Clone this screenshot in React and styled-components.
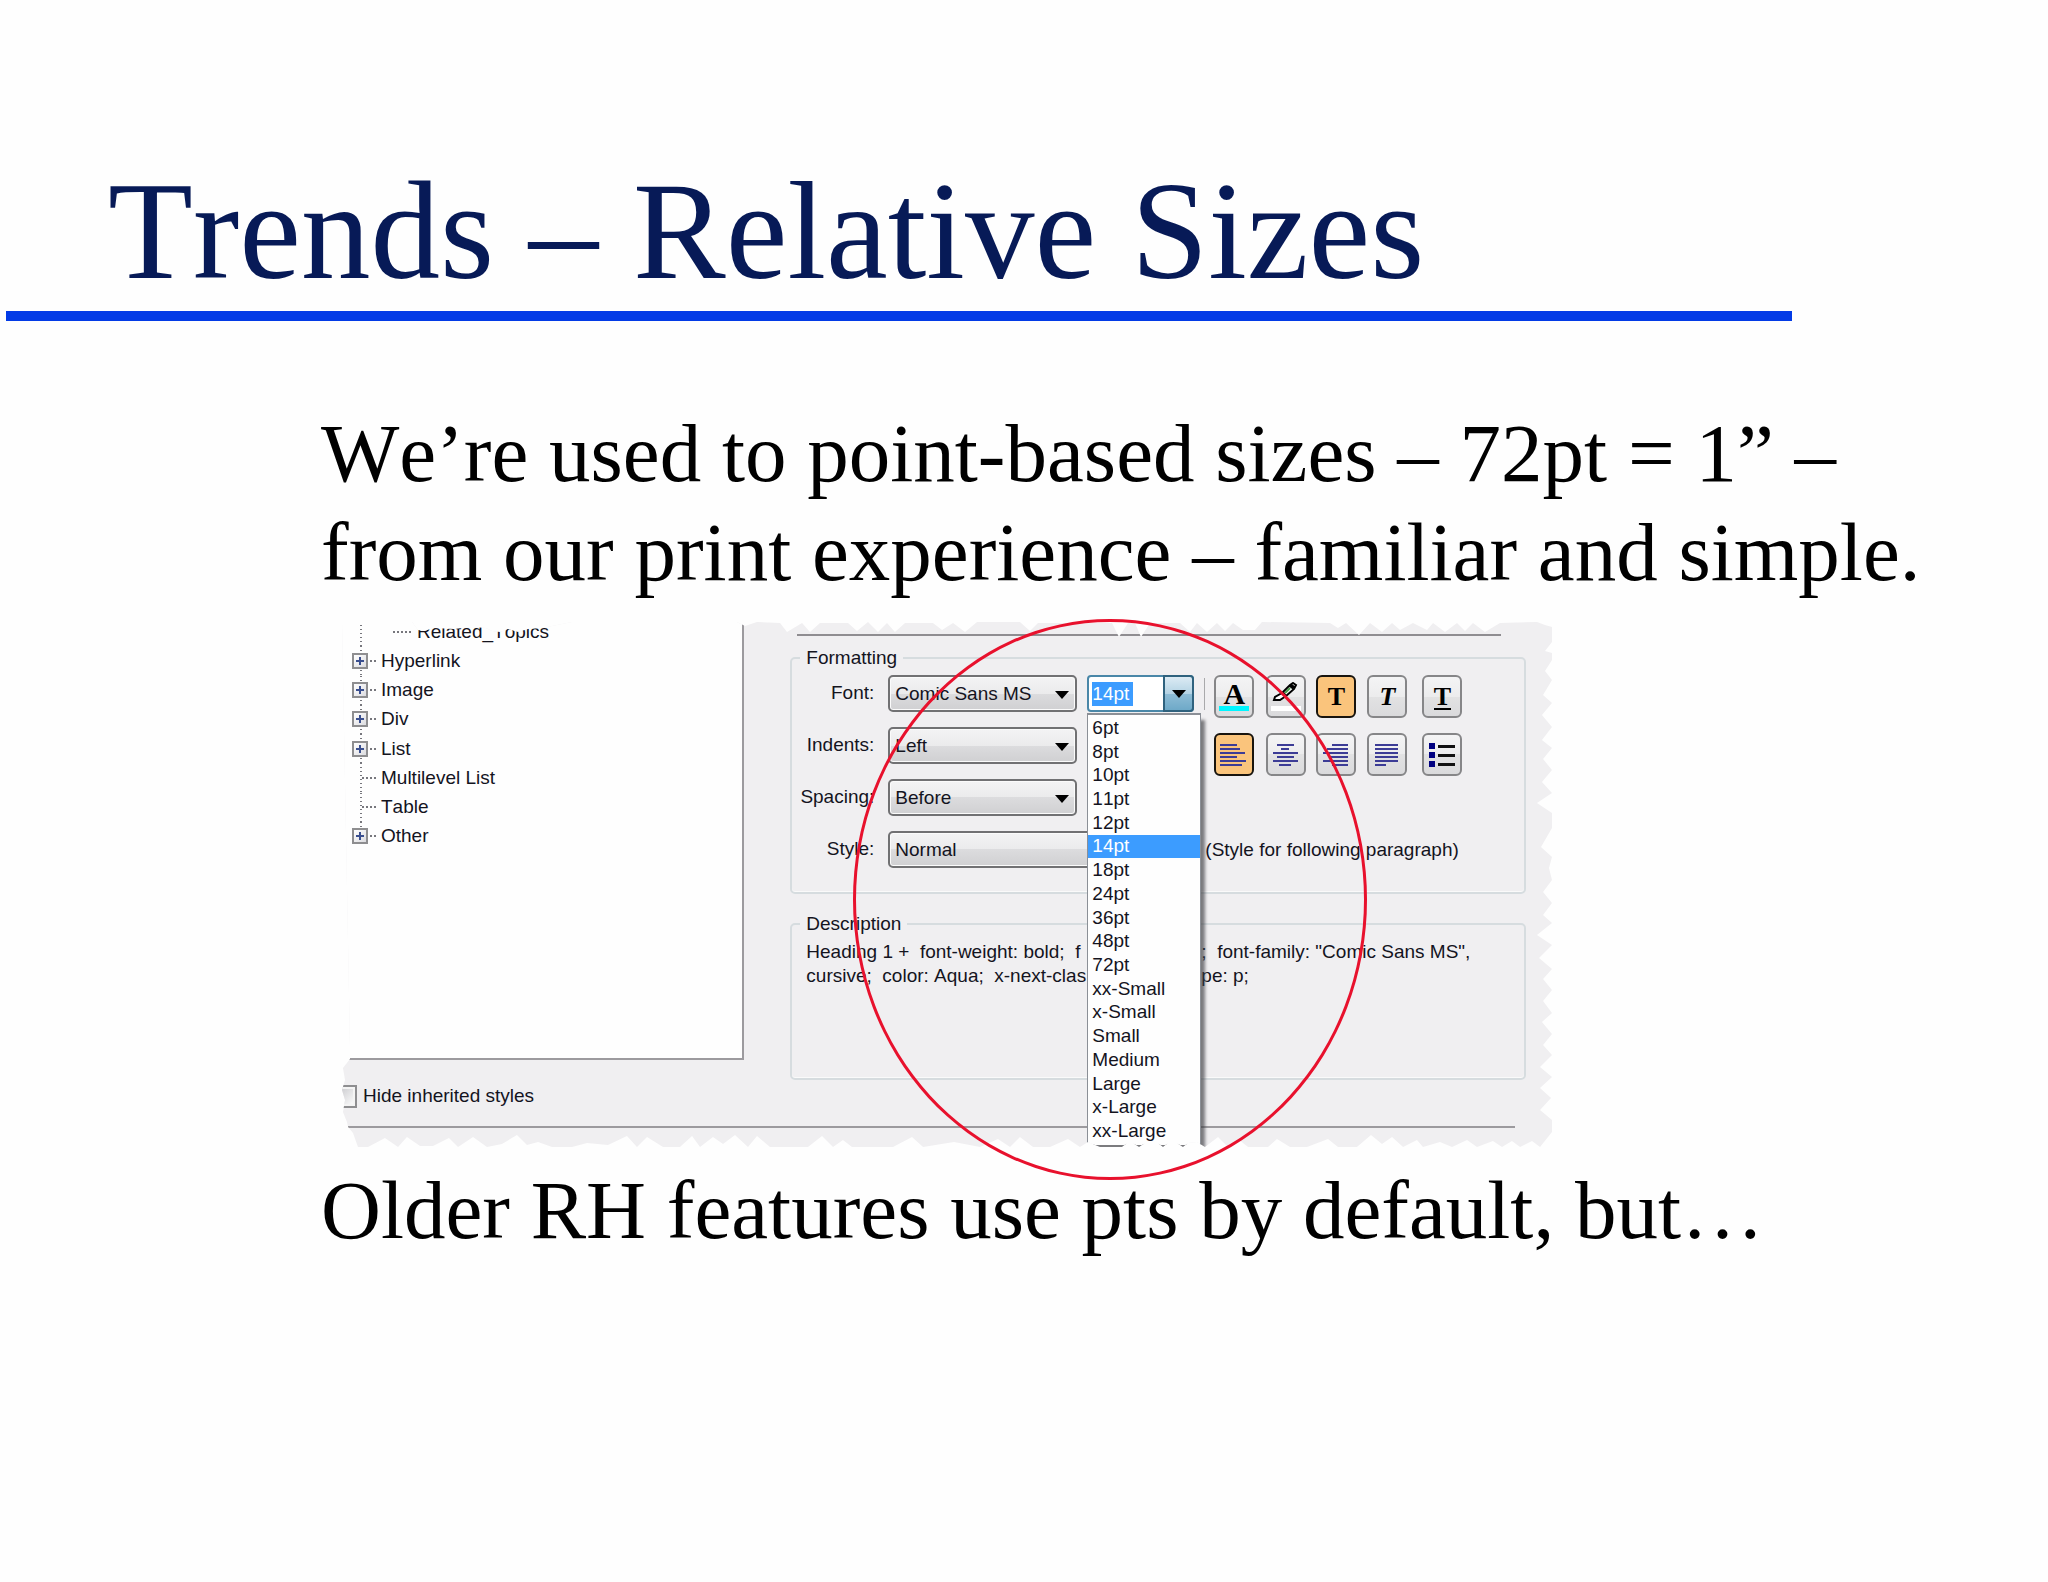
import React, { useState } from "react";
import styled, { createGlobalStyle, css } from "styled-components";

const treeItems = [
  { label: "Related_Topics", type: "child" },
  { label: "Hyperlink", type: "branch" },
  { label: "Image", type: "branch" },
  { label: "Div", type: "branch" },
  { label: "List", type: "branch" },
  { label: "Multilevel List", type: "leaf" },
  { label: "Table", type: "leaf" },
  { label: "Other", type: "branch" },
];

const sizes = [
  "6pt", "8pt", "10pt", "11pt", "12pt", "14pt", "18pt", "24pt", "36pt",
  "48pt", "72pt", "xx-Small", "x-Small", "Small", "Medium", "Large",
  "x-Large", "xx-Large",
];

// torn paper outline on a 1210 x 525 grid, clockwise from the top left
const tornEdge = [
  [0, 0], [70, 0], [76, 8], [82, 9], [92, 6], [112, 7], [130, 5], [144, 6],
  [150, 9], [158, 10], [166, 7], [176, 10], [186, 7], [200, 6], [215, 3], [230, 0],
  [395, 0], [403, 4], [415, 0], [438, 1], [445, 10], [460, 1], [468, 10],
  [478, 1], [506, 1], [515, 9], [526, 0], [536, 10], [545, 1], [553, 10],
  [563, 1], [591, 1], [600, 8], [611, 1], [623, 10], [635, 0], [678, 0],
  [688, 9], [696, 1], [770, 1], [777, 15], [786, 1], [793, 1], [799, 15],
  [808, 1], [838, 1], [848, 10], [855, 1], [865, 10], [875, 1], [883, 9],
  [891, 1], [901, 8], [913, 8], [920, 0], [988, 1], [996, 6], [1004, 1],
  [1017, 13], [1028, 1], [1040, 10], [1050, 1], [1058, 8], [1071, 1],
  [1085, 8], [1091, 1], [1103, 10], [1115, 1], [1123, 9], [1131, 1],
  [1143, 10], [1158, 1], [1195, 0], [1203, 3], [1210, 5], [1210, 20],
  [1203, 29], [1210, 31], [1210, 38], [1203, 49], [1210, 58], [1201, 73],
  [1210, 81], [1200, 93], [1210, 105], [1200, 118], [1210, 126], [1201, 137],
  [1210, 148], [1200, 160], [1210, 171], [1195, 181], [1210, 191],
  [1210, 206], [1199, 225], [1210, 235], [1207, 246], [1210, 258],
  [1201, 270], [1210, 281], [1201, 293], [1210, 301], [1195, 313],
  [1210, 323], [1197, 336], [1210, 347], [1201, 357], [1210, 368],
  [1201, 379], [1210, 391], [1200, 400], [1210, 412], [1201, 423],
  [1210, 433], [1198, 445], [1210, 455], [1198, 466], [1209, 476],
  [1198, 488], [1210, 498], [1210, 510], [1198, 525], [1190, 519],
  [1178, 525], [1170, 519], [1160, 525], [1151, 519], [1135, 525],
  [1125, 518], [1110, 525], [1098, 520], [1081, 525], [1075, 518],
  [1061, 525], [1050, 515], [1040, 522], [1029, 513], [1015, 525],
  [996, 525], [986, 517], [965, 525], [948, 525], [935, 517], [926, 525],
  [906, 525], [896, 517], [886, 525], [876, 515], [863, 525], [855, 520],
  [846, 521], [841, 525], [835, 521], [826, 521], [821, 525], [816, 521],
  [803, 521], [797, 525], [791, 521], [785, 521], [780, 525], [758, 525],
  [746, 520], [738, 525], [726, 517], [708, 525], [691, 525], [678, 515],
  [668, 525], [656, 517], [638, 525], [612, 520], [581, 525], [570, 515],
  [551, 525], [510, 525], [501, 518], [491, 525], [480, 514], [466, 525],
  [428, 525], [415, 514], [406, 525], [393, 513], [381, 522], [371, 515],
  [358, 525], [350, 514], [338, 525], [321, 525], [305, 515], [295, 525],
  [285, 514], [266, 523], [245, 521], [230, 525], [210, 525], [196, 520],
  [185, 523], [175, 513], [160, 522], [145, 525], [131, 515], [116, 525],
  [107, 516], [91, 524], [78, 524], [65, 515], [56, 525], [43, 516],
  [26, 525], [16, 525], [11, 511], [6, 505], [5, 500], [1, 490], [3, 478],
  [0, 468], [3, 458], [1, 446], [8, 437], [8, 425],
]
  .map(([x, y]) => `${((x / 1210) * 100).toFixed(2)}% ${((y / 525) * 100).toFixed(2)}%`)
  .join(", ");

const alignLines = {
  left: [[0, 17], [0, 20], [0, 25], [0, 17], [0, 26], [0, 22]],
  center: [[5, 22], [9, 17], [1, 26], [5, 22], [1, 26], [7, 19]],
  right: [[10, 26], [5, 26], [1, 26], [7, 26], [1, 26], [10, 26]],
  justify: [[2, 25], [2, 25], [2, 25], [2, 25], [2, 25], [2, 13]],
};

const AlignIcon = ({ kind }) => (
  <svg width="28" height="24" viewBox="0 0 28 24">
    {alignLines[kind].map(([from, to], index) => (
      <rect key={index} x={from} y={1 + index * 4} width={to - from} height="2" fill="#3c3c96" />
    ))}
  </svg>
);

const BulletIcon = () => (
  <svg width="28" height="26" viewBox="0 0 28 26">
    {[1, 10, 19].map((y) => (
      <React.Fragment key={y}>
        <rect x="1" y={y} width="6" height="6" fill="#000080" />
        <rect x="10" y={y + 2} width="17" height="3" fill="#111" />
      </React.Fragment>
    ))}
  </svg>
);

const PencilIcon = () => (
  <svg width="32" height="30" viewBox="0 0 32 30">
    <path d="M13 10 L20 3 L23 1 L26 3 L24 7 L16 14 Z" fill="#fff" stroke="#000" strokeWidth="2" />
    <path d="M15 11 L20 6" stroke="#4b9a4b" strokeWidth="2" />
    <path d="M20 3 L24 6" stroke="#000" strokeWidth="4" />
    <path d="M12 11 L5 15 L4 18 L10 18 L16 14" fill="#fff" stroke="#000" strokeWidth="2" />
    <rect x="1" y="24" width="30" height="5" fill="#fff" />
  </svg>
);

const ArrowIcon = () => (
  <svg width="14" height="8" viewBox="0 0 14 8">
    <path d="M0 0 H14 L7 8 Z" fill="#000" />
  </svg>
);

const SelectField = ({ id, value, wide }) => (
  <SelectBox $wide={wide}>
    <select id={id} defaultValue={value}>
      <option>{value}</option>
    </select>
    <ArrowIcon />
  </SelectBox>
);

const App = () => {
  const [size, setSize] = useState("14pt");

  return (
    <>
      <GlobalStyle />
      <Slide>
        <Title>Trends – Relative Sizes</Title>
        <TitleRule />
        <Content>
          <Paragraph>
            We’re used to point-based sizes – 72pt = 1” –<br />
            from our print experience – familiar and simple.
          </Paragraph>
          <Figure>
            <Dialog>
              <Panels>
                <div>
                  <Tree>
                    <TreeList>
                      {treeItems.map(({ label, type }) => (
                        <TreeItem key={label} $type={type}>
                          {type === "branch" && (
                            <Toggle type="button" aria-label={`Expand ${label}`}>
                              <svg width="10" height="10" viewBox="0 0 10 10">
                                <path d="M5 1 V9 M1 5 H9" stroke="#3a4f8f" strokeWidth="2" />
                              </svg>
                            </Toggle>
                          )}
                          <Dash $type={type} />
                          {label}
                        </TreeItem>
                      ))}
                    </TreeList>
                  </Tree>
                  <HideRow>
                    <input type="checkbox" />
                    Hide inherited styles
                  </HideRow>
                </div>
                <Settings>
                  <SettingsRule />
                  <Group>
                    <legend>Formatting</legend>
                    <Fields>
                      <FieldLabel htmlFor="font">Font:</FieldLabel>
                      <SelectField id="font" value="Comic Sans MS" />
                      <Combo>
                        <SizeInput aria-label="Font size" value={size} readOnly />
                        <ComboButton type="button" aria-label="Show sizes">
                          <ArrowIcon />
                        </ComboButton>
                        <SizeList role="listbox" aria-label="Font size">
                          {sizes.map((i) => (
                            <SizeOption
                              key={i}
                              role="option"
                              aria-selected={size === i}
                              $selected={size === i}
                              onClick={() => setSize(i)}>
                              {i}
                            </SizeOption>
                          ))}
                        </SizeList>
                      </Combo>
                      <Toolbar>
                        <ToolButton type="button" aria-label="Text color">
                          <ColorLetter>A</ColorLetter>
                        </ToolButton>
                        <ToolButton type="button" aria-label="Highlight">
                          <PencilIcon />
                        </ToolButton>
                        <ToolButton type="button" aria-label="Bold" $active>
                          <Letter>T</Letter>
                        </ToolButton>
                        <ToolButton type="button" aria-label="Italic">
                          <Letter $italic>T</Letter>
                        </ToolButton>
                        <ToolButton type="button" aria-label="Underline">
                          <Letter $underline>T</Letter>
                        </ToolButton>
                        <ToolButton type="button" aria-label="Align left" $active>
                          <AlignIcon kind="left" />
                        </ToolButton>
                        <ToolButton type="button" aria-label="Align center">
                          <AlignIcon kind="center" />
                        </ToolButton>
                        <ToolButton type="button" aria-label="Align right">
                          <AlignIcon kind="right" />
                        </ToolButton>
                        <ToolButton type="button" aria-label="Justify">
                          <AlignIcon kind="justify" />
                        </ToolButton>
                        <ToolButton type="button" aria-label="Bullets">
                          <BulletIcon />
                        </ToolButton>
                      </Toolbar>
                      <FieldLabel htmlFor="indents">Indents:</FieldLabel>
                      <SelectField id="indents" value="Left" />
                      <FieldLabel htmlFor="spacing">Spacing:</FieldLabel>
                      <SelectField id="spacing" value="Before" />
                      <FieldLabel htmlFor="style">Style:</FieldLabel>
                      <SelectField id="style" value="Normal" wide />
                      <Note>(Style for following paragraph)</Note>
                    </Fields>
                  </Group>
                  <Group $tall>
                    <legend>Description</legend>
                    {/* the open size list sits between the two halves */}
                    <Description>
                      <span>{"Heading 1 +  font-weight: bold;  f"}</span>
                      <span>{';  font-family: "Comic Sans MS",'}</span>
                      <span>{"cursive;  color: Aqua;  x-next-clas"}</span>
                      <span>pe: p;</span>
                    </Description>
                  </Group>
                </Settings>
              </Panels>
              <BottomRule />
            </Dialog>
            <Ring />
          </Figure>
          <Paragraph>Older RH features use pts by default, but…</Paragraph>
        </Content>
      </Slide>
    </>
  );
};

export default App;

const GlobalStyle = createGlobalStyle`
  * {
    box-sizing: border-box;
  }
  body {
    margin: 0;
    background: #fefefe;
  }
`;

const Slide = styled.main`
  min-height: 100vh;
  padding-top: 152px;
  overflow: hidden;
  font-family: "Liberation Serif", "Times New Roman", serif;
  font-kerning: none;
  color: #000;
`;
const Title = styled.h1`
  margin: 0;
  padding-left: 108px;
  font-size: 139px;
  font-weight: 400;
  line-height: 159px;
  color: #071a57;
`;
const TitleRule = styled.hr`
  width: 87.2%;
  height: 10px;
  margin: 0 0 0 6px;
  border: none;
  background: #033be6;
`;
const Content = styled.section`
  padding: 83px 0 0 321px;
`;
const Paragraph = styled.p`
  margin: 0;
  font-size: 83px;
  line-height: 99px;
  white-space: nowrap;
`;

const Figure = styled.figure`
  position: relative;
  width: 100%;
  max-width: 1210px;
  margin: 20px 0 14px 21px;
  font-family: "Liberation Sans", Arial, sans-serif;
  font-size: 19px;
  line-height: 24px;
  color: #14141e;

  select,
  input,
  button {
    font: inherit;
    color: inherit;
  }
`;
const Dialog = styled.div`
  background: #f0eff1;
  clip-path: polygon(${tornEdge});
`;
const Panels = styled.div`
  display: grid;
  grid-template-columns: minmax(0, 1fr) minmax(0, 2fr);
  min-height: 504px;
`;
const Tree = styled.div`
  display: flow-root;
  height: 438px;
  margin-right: 1px;
  background: #fefefe;
  border: solid #9c9a9e;
  border-width: 0 2px 2px 0;
`;
const TreeList = styled.ul`
  display: flex;
  flex-direction: column;
  height: 234px;
  margin: -5px 0 0;
  padding: 0;
  list-style: none;
`;
const TreeItem = styled.li`
  display: flex;
  flex: 1;
  align-items: center;
  padding-left: ${({ $type }) => ($type === "child" ? "51px" : $type === "leaf" ? "20px" : "10px")};
  background: repeating-linear-gradient(#77777d 0 1px, transparent 1px 4px) 18px 0 / 2px 100% no-repeat;

  &:last-child {
    background-size: 2px 12px;
  }
`;
const Toggle = styled.button`
  display: flex;
  align-items: center;
  justify-content: center;
  width: 16px;
  height: 16px;
  padding: 0;
  border: 2px solid #8e8e90;
  background: linear-gradient(135deg, #fff, #dcdce0);
`;
const Dash = styled.span`
  width: ${({ $type }) => ($type === "child" ? "18px" : $type === "leaf" ? "14px" : "6px")};
  height: 2px;
  margin: 0 ${({ $type }) => ($type === "child" ? "6px" : "5px")} 0 ${({ $type }) => ($type === "branch" ? "2px" : "0")};
  background: repeating-linear-gradient(90deg, #77777d 0 2px, transparent 2px 4px);
`;
const HideRow = styled.label`
  display: flex;
  align-items: center;
  gap: 6px;
  width: max-content;
  margin: 24px 0 0 -8px;

  input {
    appearance: none;
    width: 23px;
    height: 23px;
    margin: 0;
    border: 2px solid #8e8e90;
    background: linear-gradient(135deg, #c4c4c8, #fff);
    box-shadow: inset 0 0 0 2px #f4f4f4;
  }
`;

const Settings = styled.div`
  padding: 12px 26px 0 45px;
`;
const SettingsRule = styled.div`
  height: 2px;
  margin: 0 25px 10px 7px;
  background: #8f8d91;
`;
const Group = styled.fieldset`
  min-width: 0;
  height: ${({ $tall }) => ($tall ? "168px" : "248px")};
  margin: 0 0 18px;
  padding: 0 0 0 8px;
  border: 2px solid #d6dcdf;
  border-radius: 5px;
  box-shadow: inset 0 -1px 0 #fafafa;

  legend {
    padding: 0 6px;
  }
`;
const Fields = styled.div`
  display: grid;
  grid-template-columns: 78px 189px 107px 1fr;
  grid-auto-rows: 37px;
  gap: 15px 10px;
  padding-top: 5px;
`;
const FieldLabel = styled.label`
  grid-column: 1;
  display: flex;
  align-items: center;
  justify-content: flex-end;
  padding: 0 4px 2px 0;
  white-space: nowrap;
`;
const SelectBox = styled.div`
  position: relative;
  grid-column: ${({ $wide }) => ($wide ? "2 / 4" : "2")};

  select {
    appearance: none;
    width: 100%;
    height: 100%;
    padding: 0 5px;
    border: 2px solid #717173;
    border-radius: 5px;
    background: linear-gradient(#f3f3f4, #ebebec 50%, #dcdcde 50%, #d0d0d2);
    box-shadow: inset 0 0 0 1px #fbfbfb;
  }
  svg {
    position: absolute;
    top: 16px;
    right: 8px;
    pointer-events: none;
  }
`;
const Combo = styled.div`
  position: relative;
  z-index: 1;
  grid-column: 3;
  display: flex;
  align-items: center;
  justify-content: space-between;
  padding-left: 3px;
  border: 2px solid #4a87a8;
  border-radius: 4px;
  background: #fff;
`;
const SizeInput = styled.input`
  width: 41px;
  height: 24px;
  padding: 0;
  border: none;
  outline: none;
  && {
    color: #fff;
  }
  background: #3c9cff;
`;
const ComboButton = styled.button`
  display: flex;
  align-items: center;
  justify-content: center;
  width: 31px;
  height: 37px;
  margin: -2px;
  padding: 0;
  border: 2px solid #2f627e;
  border-radius: 0 4px 4px 0;
  background: linear-gradient(#dcebf4, #b4d3e4 50%, #8fbdd6 50%, #6ea9c8);
`;
const SizeList = styled.ul`
  position: absolute;
  top: 36px;
  left: -2px;
  display: flex;
  flex-direction: column;
  width: 114px;
  height: 432px;
  margin: 0;
  padding: 1px 0 2px;
  border: solid #8b8f96;
  border-width: 2px 1px 0;
  background: #fefefe;
  box-shadow: 5px 6px 3px -1px rgba(60, 60, 64, 0.65);
  line-height: 20px;
  list-style: none;
`;
const SizeOption = styled.li`
  display: flex;
  flex: 1;
  align-items: center;
  padding-left: 4px;
  white-space: nowrap;

  ${({ $selected }) =>
    $selected &&
    css`
      background: #3c9cff;
      color: #fff;
    `}
`;
const Toolbar = styled.div`
  grid-column: 4;
  grid-row: 1 / 4;
  display: grid;
  grid-template-columns: 52px 50px 51px 55px 40px;
  grid-auto-rows: 43px;
  row-gap: 15px;
  padding-left: 10px;
  background: linear-gradient(#a9a9ab, #a9a9ab) 0 3px / 1px 32px no-repeat;
`;
const ToolButton = styled.button`
  display: flex;
  align-items: center;
  justify-content: center;
  width: 40px;
  height: 43px;
  padding: 0;
  border: 2px solid ${({ $active }) => ($active ? "#18140e" : "#868688")};
  border-radius: 6px;
  background: ${({ $active }) =>
    $active ? "#fac47c" : "linear-gradient(#f4f4f5, #ececed 50%, #e2e2e3 50%, #dadadc)"};
`;
const Letter = styled.span`
  height: 26px;
  font: ${({ $italic }) => ($italic ? "italic" : "normal")} 700 26px/26px "Liberation Serif", serif;
  color: #000;
  border-bottom: ${({ $underline }) => ($underline ? "2px solid #000" : "none")};
`;
const ColorLetter = styled.span`
  width: 30px;
  height: 29px;
  font: 700 30px/24px "Liberation Serif", serif;
  color: #000;
  border-bottom: 5px solid #00f5ff;
`;
const Note = styled.span`
  grid-column: 4;
  display: flex;
  align-items: center;
  padding-left: 1px;
  white-space: nowrap;
`;
const Description = styled.p`
  display: grid;
  grid-template-columns: 395px 1fr;
  margin: 4px 0 0;
  padding-left: 6px;
  white-space: pre;
`;
const BottomRule = styled.div`
  height: 21px;
  margin: 0 37px 0 6px;
  border-top: 2px solid #9c9a9e;
`;

// ellipse drawn over the dialog to point at the size list
const Ring = styled.div`
  position: absolute;
  top: -3px;
  left: 42.2%;
  width: 42.5%;
  height: 561px;
  border: 3px solid #e8112d;
  border-radius: 50%;
  pointer-events: none;
`;
